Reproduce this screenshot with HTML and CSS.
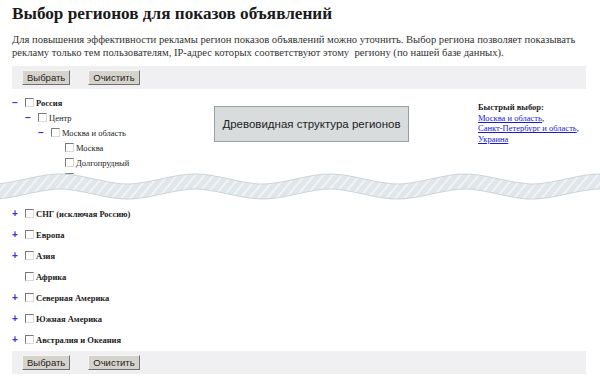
FILE: index.html
```html
<!DOCTYPE html>
<html lang="ru">
<head>
  <meta charset="UTF-8">
  <title>Выбор регионов для показов объявлений</title>
  <link rel="stylesheet" href="styles.css">
</head>
<body>

  <div class="page">
    <h1>Выбор регионов для показов объявлений</h1>
    <p class="intro">Для повышения эффективности рекламы регион показов объявлений можно уточнить. Выбор региона позволяет показывать рекламу только тем пользователям, IP-адрес которых соответствуют этому&nbsp; региону (по нашей базе данных).</p>

    <div class="toolbar">
      <button class="btn">Выбрать</button>
      <button class="btn">Очистить</button>
    </div>

    <!-- Top part of the tree, cut by the wave -->
    <div class="tree-top">
      <ul class="tree">
        <li class="row lvl0"><span class="toggle">–</span><span class="check"></span><b>Россия</b></li>
        <li class="row lvl1"><span class="toggle">–</span><span class="check"></span>Центр</li>
        <li class="row lvl2"><span class="toggle">–</span><span class="check"></span>Москва и область</li>
        <li class="row lvl3"><span class="toggle"></span><span class="check"></span>Москва</li>
        <li class="row lvl3"><span class="toggle"></span><span class="check"></span>Долгопрудный</li>
        <li class="row lvl3"><span class="toggle"></span><span class="check"></span></li>
      </ul>

      <div class="callout">Древовидная структура регионов</div>

      <div class="quick">
        <b>Быстрый выбор:</b><br>
        <a href="#">Москва и область</a>,<br>
        <a href="#">Санкт-Петербург и область</a>,<br>
        <a href="#">Украина</a>
      </div>
    </div>
  </div>

  <svg class="wave" width="600" height="36" viewBox="0 0 600 36">
    <defs>
      <pattern id="stripes" width="7" height="7" patternUnits="userSpaceOnUse" patternTransform="rotate(40)">
        <rect width="7" height="7" fill="#e0e6e9"/>
        <rect width="2" height="7" fill="#f1f4f5"/>
      </pattern>
    </defs>
    <path d="M -7.5 24.5 C 16.8 24.5 35.7 14.5 60 14.5 S 103.2 24.5 127.5 24.5 S 170.7 14.5 195 14.5 S 238.2 24.5 262.5 24.5 S 305.7 14.5 330 14.5 S 373.2 24.5 397.5 24.5 S 440.7 14.5 465 14.5 S 508.2 24.5 532.5 24.5 S 575.7 14.5 600 14.5 S 643.2 24.5 667.5 24.5 L 667.5 60 L -7.5 60 Z" fill="#fff"/>
    <path d="M -7.5 24.5 C 16.8 24.5 35.7 14.5 60 14.5 S 103.2 24.5 127.5 24.5 S 170.7 14.5 195 14.5 S 238.2 24.5 262.5 24.5 S 305.7 14.5 330 14.5 S 373.2 24.5 397.5 24.5 S 440.7 14.5 465 14.5 S 508.2 24.5 532.5 24.5 S 575.7 14.5 600 14.5 S 643.2 24.5 667.5 24.5" fill="none" stroke="#cdd5d9" stroke-width="16"/>
    <path d="M -7.5 24.5 C 16.8 24.5 35.7 14.5 60 14.5 S 103.2 24.5 127.5 24.5 S 170.7 14.5 195 14.5 S 238.2 24.5 262.5 24.5 S 305.7 14.5 330 14.5 S 373.2 24.5 397.5 24.5 S 440.7 14.5 465 14.5 S 508.2 24.5 532.5 24.5 S 575.7 14.5 600 14.5 S 643.2 24.5 667.5 24.5" fill="none" stroke="url(#stripes)" stroke-width="14"/>
  </svg>

  <div class="page">
    <ul class="tree tree-bottom">
      <li class="row"><span class="toggle">+</span><span class="check"></span><b>СНГ (исключая Россию)</b></li>
      <li class="row"><span class="toggle">+</span><span class="check"></span><b>Европа</b></li>
      <li class="row"><span class="toggle">+</span><span class="check"></span><b>Азия</b></li>
      <li class="row"><span class="toggle"></span><span class="check"></span><b>Африка</b></li>
      <li class="row"><span class="toggle">+</span><span class="check"></span><b>Северная Америка</b></li>
      <li class="row"><span class="toggle">+</span><span class="check"></span><b>Южная Америка</b></li>
      <li class="row"><span class="toggle">+</span><span class="check"></span><b>Австралия и Океания</b></li>
    </ul>

    <div class="toolbar toolbar-bottom">
      <button class="btn">Выбрать</button>
      <button class="btn">Очистить</button>
    </div>
  </div>

</body>
</html>
```

FILE: styles.css
```css
body {
  margin: 0;
  font-family: "Liberation Serif", "Times New Roman", serif;
  color: #222;
  background: #fff;
}

.page {
  padding: 0 14px 0 12px;
}

h1 {
  margin: 0;
  padding-top: 3px;
  font-size: 17.2px;
  line-height: 22px;
  color: #1a1a1a;
}

.intro {
  margin: 8px 0 0;
  font-size: 10.6px;
  line-height: 13px;
  color: #333;
}

/* Button bar */
.toolbar {
  display: flex;
  gap: 18px;
  margin-top: 7px;
  padding: 4px 10px;
  background: #f0f0f2;
}

.btn {
  height: 15px;
  padding: 0 4px;
  font-family: "Liberation Sans", Arial, sans-serif;
  font-size: 9.5px;
  line-height: 13px;
  color: #222;
  background: #d6d3cc;
  border: 1px solid;
  border-color: #f4f4f4 #707070 #707070 #f4f4f4;
  cursor: pointer;
}

/* Tree */
.tree {
  margin: 0;
  padding: 0;
  list-style: none;
  font-size: 8.5px;
}

.row {
  display: flex;
  align-items: center;
  height: 15px;
}

.lvl1 { padding-left: 13px; }
.lvl2 { padding-left: 26px; }
.lvl3 { padding-left: 40px; }

.toggle {
  width: 13px;
  color: #3434d0;
  font-family: "Liberation Sans", Arial, sans-serif;
  font-size: 10px;
  font-weight: bold;
}

.check {
  width: 7px;
  height: 7px;
  margin-right: 2px;
  border: 1px solid;
  border-color: #7a7a7a #d8d8d8 #d8d8d8 #7a7a7a;
  background: #fff;
}

.tree-top {
  display: flex;
  align-items: flex-start;
  height: 82px;
  margin-top: 6px;
  overflow: hidden;
}

.tree-top .tree {
  flex: 0 0 202px;
}

.callout {
  margin-top: 11px;
  width: 193px;
  height: 34px;
  border: 1px solid #9a9e9f;
  background: #d8dcdd;
  font-family: "Liberation Sans", Arial, sans-serif;
  font-size: 11.5px;
  line-height: 34px;
  text-align: center;
  white-space: nowrap;
  color: #222;
}

.quick {
  margin-left: 69px;
  margin-top: 7px;
  font-size: 8.5px;
  line-height: 10.7px;
  white-space: nowrap;
}

.quick a {
  color: #1a1ad6;
}

/* Wave break */
.wave {
  display: block;
  margin-top: -10px;
}

.tree-bottom .row {
  height: 21px;
}

.toolbar-bottom {
  margin-top: 1px;
}
```
